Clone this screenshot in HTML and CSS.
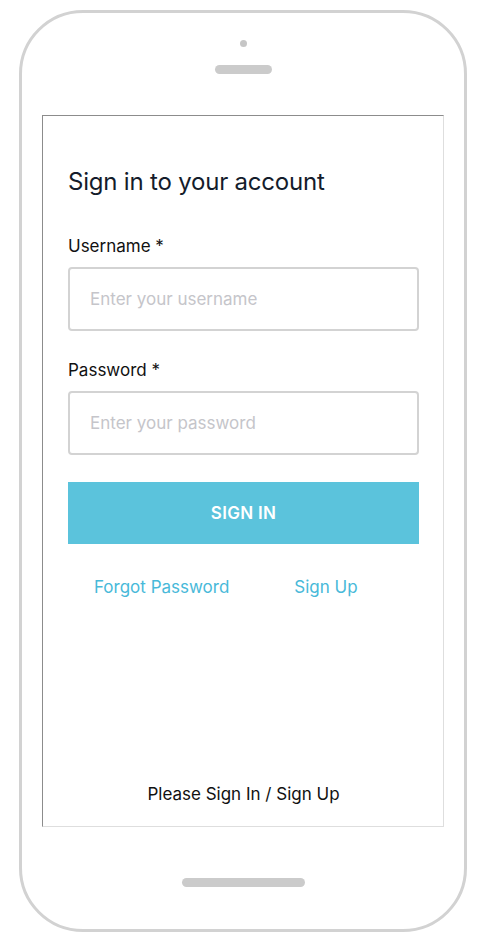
FILE: index.html
```html
<!DOCTYPE html>
<html lang="en">
<head>
    <meta charset="UTF-8">
    <title>Sign in</title>
    <link rel="stylesheet" href="styles.css">
</head>
<body>

<div class="phone">
    <div class="camera"></div>
    <div class="speaker"></div>

    <div class="screen">
        <h1>Sign in to your account</h1>

        <label class="field-label" for="username">Username *</label>
        <input type="text" id="username" placeholder="Enter your username">

        <label class="field-label pw" for="password">Password *</label>
        <input type="password" id="password" placeholder="Enter your password">

        <button class="sign-btn">SIGN IN</button>

        <div class="links">
            <a href="#">Forgot Password</a>
            <a href="#">Sign Up</a>
        </div>

        <div class="status">Please Sign In / Sign Up</div>
    </div>

    <div class="home-bar"></div>
</div>

</body>
</html>
```

FILE: styles.css
```css
* {
    box-sizing: border-box;
}
body {
    margin: 0;
    background: #fff;
    font-family: Inter, "Noto Sans", sans-serif;
}
.phone {
    margin: 10px 0 0 19px;
    width: 448px;
    height: 922px;
    border: 3px solid #d2d2d2;
    border-radius: 64px;
    display: flex;
    flex-direction: column;
    align-items: center;
}
.camera {
    margin-top: 27px;
    width: 7px;
    height: 7px;
    border-radius: 50%;
    background: #c6c6c6;
}
.speaker {
    margin-top: 18px;
    width: 57px;
    height: 9px;
    border-radius: 5px;
    background: #cbcbcb;
}
.screen {
    margin-top: 41px;
    width: 402px;
    height: 712px;
    border-top: 1px solid #8c8c8c;
    border-left: 1px solid #8c8c8c;
    border-right: 1px solid #dedede;
    border-bottom: 1px solid #dedede;
    padding: 0 24px 0 25px;
    display: flex;
    flex-direction: column;
}
h1 {
    margin: 51px 0 0;
    font-size: 24px;
    line-height: 30px;
    font-weight: 400;
    letter-spacing: -0.2px;
    color: #141c2b;
}
.field-label {
    margin-top: 38px;
    font-size: 17px;
    line-height: 22px;
    color: #111;
}
.field-label.pw {
    margin-top: 28px;
}
input {
    margin-top: 10px;
    height: 64px;
    border: 2px solid #d3d3d3;
    border-radius: 4px;
    padding: 0 20px;
    font-family: inherit;
    font-size: 17px;
    color: #222;
    outline: none;
}
input::placeholder {
    color: #c5c5ca;
}
.sign-btn {
    margin-top: 27px;
    height: 62px;
    border: none;
    background: #5bc3dc;
    color: #fff;
    font-family: inherit;
    font-size: 17px;
    font-weight: 600;
    letter-spacing: 0.3px;
}
.links {
    margin-top: 32px;
    padding-left: 26px;
    display: flex;
    gap: 65px;
    font-size: 17px;
    line-height: 22px;
}
.links a {
    color: #48b9d9;
    text-decoration: none;
}
.status {
    margin-top: auto;
    padding-bottom: 21px;
    text-align: center;
    font-size: 17px;
    line-height: 22px;
    color: #111;
}
.home-bar {
    margin-top: 51px;
    width: 123px;
    height: 9px;
    border-radius: 5px;
    background: #cbcbcb;
}
```
